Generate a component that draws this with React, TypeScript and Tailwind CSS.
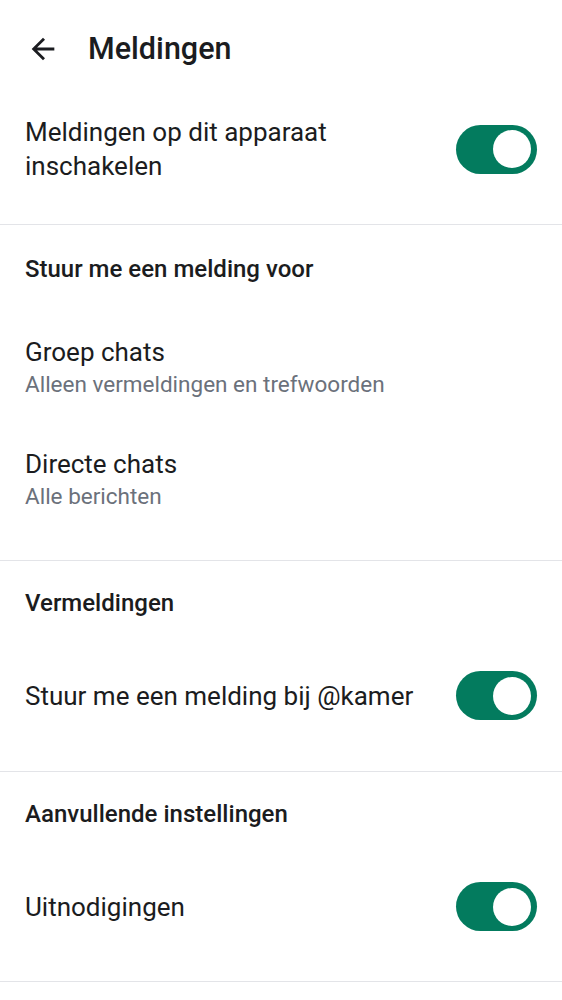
import React from "react";

function Toggle() {
  return (
    <div className="w-[81px] h-[49px] rounded-full bg-[#037b5e] flex items-center justify-end pr-[6px] shrink-0">
      <div className="w-[38px] h-[38px] rounded-full bg-white" />
    </div>
  );
}

function SectionHeader({ children }: { children: React.ReactNode }) {
  return (
    <div className="h-[84px] flex items-center px-[25px] text-[24px] font-medium font-['Roboto_Medium','Roboto',sans-serif] text-[#1b1c20]">
      {children}
    </div>
  );
}

function ToggleRow({ label }: { label: string }) {
  return (
    <div className="h-[101px] flex items-center justify-between pl-[25px] pr-[25px]">
      <div className="text-[26px] leading-[34px] text-[#1b1c20]">{label}</div>
      <Toggle />
    </div>
  );
}

function Divider() {
  return <div className="h-px bg-[#e3e4e8]" />;
}

function Item({ title, sub }: { title: string; sub: string }) {
  return (
    <div className="px-[25px] py-[24px]">
      <div className="text-[26px] leading-[34px] text-[#1b1c20]">{title}</div>
      <div className="text-[22.5px] leading-[30px] text-[#6b717b]">{sub}</div>
    </div>
  );
}

export default function App() {
  return (
    <div className="w-[562px] min-h-[1000px] bg-white font-['Roboto',sans-serif]">
      <div className="h-[98px] flex items-center">
        <svg
          className="ml-[26px]"
          width="34"
          height="34"
          viewBox="0 0 24 24"
          fill="#1b1c20"
        >
          <path d="M20 11H7.83l5.59-5.59L12 4l-8 8 8 8 1.41-1.41L7.83 13H20v-2z" />
        </svg>
        <div className="ml-[28px] text-[30.5px] font-medium font-['Roboto_Medium','Roboto',sans-serif] text-[#1b1c20]">
          Meldingen
        </div>
      </div>

      <div className="h-[102px] flex items-center justify-between px-[25px]">
        <div className="text-[26px] leading-[34px] text-[#1b1c20] w-[330px]">
          Meldingen op dit apparaat inschakelen
        </div>
        <Toggle />
      </div>
      <div className="h-[24px]" />
      <Divider />

      <div className="h-[2px]" />
      <SectionHeader>Stuur me een melding voor</SectionHeader>
      <Item title="Groep chats" sub="Alleen vermeldingen en trefwoorden" />
      <Item title="Directe chats" sub="Alle berichten" />
      <div className="h-[25px]" />
      <Divider />

      <SectionHeader>Vermeldingen</SectionHeader>
      <ToggleRow label="Stuur me een melding bij @kamer" />
      <div className="h-[25px]" />
      <Divider />

      <SectionHeader>Aanvullende instellingen</SectionHeader>
      <ToggleRow label="Uitnodigingen" />
      <div className="h-[24px]" />
      <Divider />
    </div>
  );
}
